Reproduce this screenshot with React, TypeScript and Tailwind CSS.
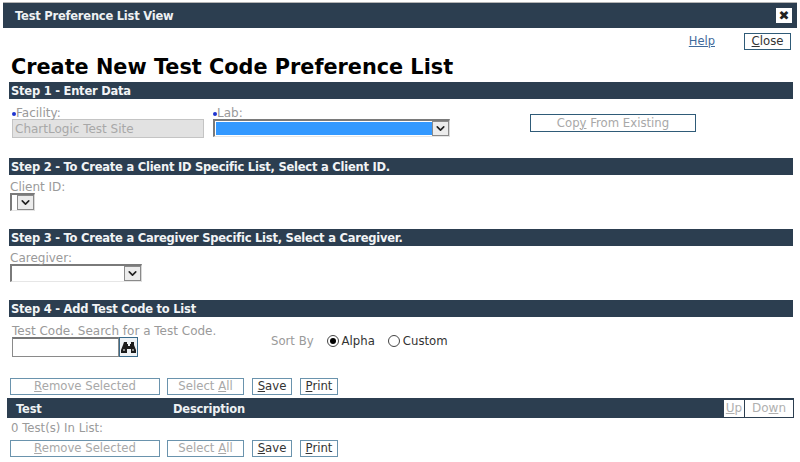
import React from "react";
import { ChevronDown } from "lucide-react";

const font = { fontFamily: '"DejaVu Sans", Verdana, sans-serif' };

const StepBar = ({ children }: { children: React.ReactNode }) => (
  <div className="ml-[9px] mr-[7px] h-[17px] bg-[#2c3e50] pl-[2px] text-[11.5px] font-bold leading-[19px] tracking-[-0.23px] text-[#f2f4f6]">{children}</div>
);

const Label = ({ children }: { children: React.ReactNode }) => (
  <div className="relative z-10 h-[13px] text-[12px] leading-[15px] text-[#9a9a9a]">{children}</div>
);

const Dot = () => <span className="mb-[1px] inline-block h-[4px] w-[4px] rounded-full bg-[#1f35d0]" />;

const SelectBox = ({ width, selected }: { width: string; selected?: boolean }) => (
  <div className={`flex h-[18px] items-stretch border-t-2 border-l-2 border-[#7a7a7a] border-r border-b border-r-[#d8d8d8] border-b-[#e6e6e6] ${width}`}>
    <div className={`flex-1 ${selected ? "my-[1px] ml-[1px] bg-[#3399ff]" : "bg-white"}`} />
    <div className="flex w-[17px] items-center justify-center border border-[#8a8a8a] bg-[#ececec]">
      <ChevronDown size={13} strokeWidth={3} className="text-[#222]" />
    </div>
  </div>
);

const Btn = ({ width, disabled, light, children }: { width: string; disabled?: boolean; light?: boolean; children: React.ReactNode }) => (
  <div className={`flex h-[17px] items-center justify-center border bg-white pt-[1px] text-[11.7px] ${light ? "border-[#6a93ad]" : "border-[#2f5b78]"} ${width} ${disabled ? "text-[#a8a8a8]" : "text-[#333]"}`}>
    {children}
  </div>
);

const ActionRow = () => (
  <div className="ml-[10px] flex">
    <Btn light width="w-[150px]" disabled><span><u>R</u>emove Selected</span></Btn>
    <Btn light width="ml-[7px] w-[77px]" disabled><span>Select <u>A</u>ll</span></Btn>
    <Btn light width="ml-[8px] w-[40px]"><span><u>S</u>ave</span></Btn>
    <Btn light width="ml-[8px] w-[38px]"><span><u>P</u>rint</span></Btn>
  </div>
);

const Radio = ({ checked }: { checked?: boolean }) => (
  <span className="flex h-[12px] w-[12px] items-center justify-center rounded-full border border-[#444] bg-white">
    {checked && <span className="h-[6px] w-[6px] rounded-full bg-black" />}
  </span>
);

const Binoculars = () => (
  <svg width="16" height="13" viewBox="0 0 16 13" fill="#1c1c1c">
    <path d="M3 1h3v2h1v2h2V3h1V1h3v3l2 5v3H10V8H6v4H0V9l2-5z" />
    <rect x="7" y="6" width="2" height="1" />
    <rect x="2" y="8" width="2" height="2" fill="#8a8a8a" />
    <rect x="11" y="8" width="2" height="2" fill="#8a8a8a" />
  </svg>
);

export default function App() {
  return (
    <div className="h-[462px] w-[800px] overflow-hidden bg-white pt-[2px]" style={font}>
      {/* Dialog title bar */}
      <div className="mx-[3px] flex h-[26px] items-center justify-between border-t border-[#b5b5b5] bg-[#2c3e50] pl-[12px] pr-[5px]">
        <span className="mt-[3px] text-[11.5px] font-bold tracking-[-0.23px] text-[#eef1f3]">Test Preference List View</span>
        <span className="mb-[1px] flex h-[15px] w-[16px] items-center justify-center bg-white text-[13px] font-bold leading-none text-[#222]">✖</span>
      </div>

      <div className="mt-[5px] flex h-[17px] items-center justify-end pr-[9px]">
        <span className="mr-[29px] text-[11.5px] text-[#3f6a9c] underline">Help</span>
        <Btn width="w-[47px]"><span><u>C</u>lose</span></Btn>
      </div>

      <h1 className="ml-[11px] mt-[4px] h-[28px] text-[20.8px] font-bold leading-[26px] text-black">Create New Test Code Preference List</h1>

      <StepBar>Step 1 - Enter Data</StepBar>
      <div className="ml-[12px] mt-[7px] flex h-[52px] items-start">
        <div className="w-[201px]">
          <Label><Dot />Facility:</Label>
          <div className="h-[19px] w-[192px] border border-[#c4c4c4] bg-[#e2e2e2] pl-[2px] text-[12px] leading-[19px] text-[#a8a8a8]">ChartLogic Test Site</div>
        </div>
        <div className="w-[317px]">
          <Label><Dot />Lab:</Label>
          <SelectBox width="w-[237px]" selected />
        </div>
        <div className="mt-[8px]">
          <Btn width="w-[166px] h-[18px]" disabled><span>Cop<u>y</u> From Existing</span></Btn>
        </div>
      </div>

      <StepBar>Step 2 - To Create a Client ID Specific List, Select a Client ID.</StepBar>
      <div className="ml-[10px] mt-[5px] h-[49px]">
        <Label>Client ID:</Label>
        <SelectBox width="w-[25px]" />
      </div>

      <StepBar>Step 3 - To Create a Caregiver Specific List, Select a Caregiver.</StepBar>
      <div className="ml-[10px] mt-[5px] h-[49px]">
        <Label>Caregiver:</Label>
        <SelectBox width="w-[132px]" />
      </div>

      <StepBar>Step 4 - Add Test Code to List</StepBar>
      <div className="ml-[12px] mt-[7px] flex h-[54px] items-start">
        <div className="w-[259px]">
          <Label>Test Code. Search for a Test Code.</Label>
          <div className="flex h-[20px]">
            <div className="w-[107px] border border-t-2 border-[#8a8a8a] border-t-[#777] bg-white" />
            <div className="flex w-[19px] items-center justify-center border border-[#3a6a8a] bg-[#eef2f5]"><Binoculars /></div>
          </div>
        </div>
        <div className="mt-[10px] flex items-center text-[11.7px] leading-[14px]">
          <span className="text-[#9a9a9a]">Sort By</span>
          <span className="ml-[13px]"><Radio checked /></span>
          <span className="ml-[3px] text-[#333]">Alpha</span>
          <span className="ml-[13px]"><Radio /></span>
          <span className="ml-[3px] text-[#333]">Custom</span>
        </div>
      </div>

      <ActionRow />

      {/* Results table head */}
      <div className="ml-[7px] mr-[6px] mt-[3px] flex h-[20px] items-center border border-[#2c3e50] bg-[#2c3e50] pl-[8px] text-[11.5px] font-bold tracking-[-0.23px] text-[#eef1f3]">
        <span className="mt-[3px] w-[157px]">Test</span>
        <span className="mt-[3px] flex-1">Description</span>
        <div className="flex h-[17px] gap-[1px] text-[12px] font-normal tracking-normal text-[#b0b0b0]">
          <span className="flex w-[20px] items-center justify-center bg-white"><span><u>U</u>p</span></span>
          <span className="flex w-[48px] items-center justify-center bg-white"><span>Do<u>w</u>n</span></span>
        </div>
      </div>

      <div className="ml-[11px] mt-[2px] h-[20px] text-[11.7px] leading-[16px] text-[#9a9a9a]">0 Test(s) In List:</div>

      <ActionRow />
    </div>
  );
}
